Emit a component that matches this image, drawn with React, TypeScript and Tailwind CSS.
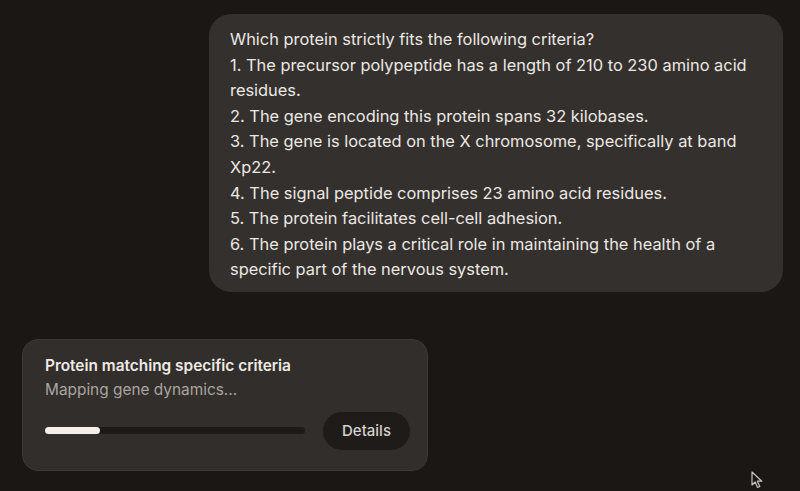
import React from "react";

const criteria = [
  "Which protein strictly fits the following criteria?",
  "1. The precursor polypeptide has a length of 210 to 230 amino acid residues.",
  "2. The gene encoding this protein spans 32 kilobases.",
  "3. The gene is located on the X chromosome, specifically at band Xp22.",
  "4. The signal peptide comprises 23 amino acid residues.",
  "5. The protein facilitates cell-cell adhesion.",
  "6. The protein plays a critical role in maintaining the health of a specific part of the nervous system.",
];

function Cursor() {
  return (
    <svg width="13" height="18" viewBox="0 0 13 18" className="absolute left-[751px] top-[471px]">
      <path d="M1 1 L1 14 L4.2 11 L6.6 16.5 L8.8 15.5 L6.4 10.2 L10.8 10.2 Z" fill="#1a1614" stroke="#c9c5c1" strokeWidth="1.2" strokeLinejoin="round" />
    </svg>
  );
}

export default function App() {
  return (
    <div className="relative w-[800px] h-[491px] overflow-hidden bg-[#1b1715] font-['Inter','Liberation_Sans',sans-serif] antialiased">
      <div className="flex flex-col pt-[14px] pl-[22px] pr-[17px]">
        <div className="self-end w-[574px] rounded-[22px] bg-[#34302d] pl-[21px] pr-[23px] pt-[13px] pb-[9px] text-[16.4px] leading-[25.6px] text-[#ece8e4]">
          {criteria.map((line) => (
            <p key={line}>{line}</p>
          ))}
        </div>

        <div className="mt-[47px] w-[406px] rounded-[16px] border border-[#3d3936] bg-[#322e2b] pl-[22px] pr-[17px] pt-[16px] pb-[20px]">
          <div className="text-[15.4px] font-semibold leading-5 text-[#eeeae6]">Protein matching specific criteria</div>
          <div className="mt-[4px] text-[15.4px] leading-5 text-[#aaa5a0]">Mapping gene dynamics...</div>
          <div className="mt-[12px] flex items-center gap-[18px]">
            <div className="h-[7px] w-[260px] shrink-0 rounded-full bg-[#1e1a18]">
              <div className="h-full w-[55px] rounded-full bg-[#f6eee8]" />
            </div>
            <button className="h-[38px] w-[87px] shrink-0 rounded-full bg-[#1f1b19] text-[15px] font-medium text-[#d5d1cd]">
              Details
            </button>
          </div>
        </div>
      </div>
      <Cursor />
    </div>
  );
}
